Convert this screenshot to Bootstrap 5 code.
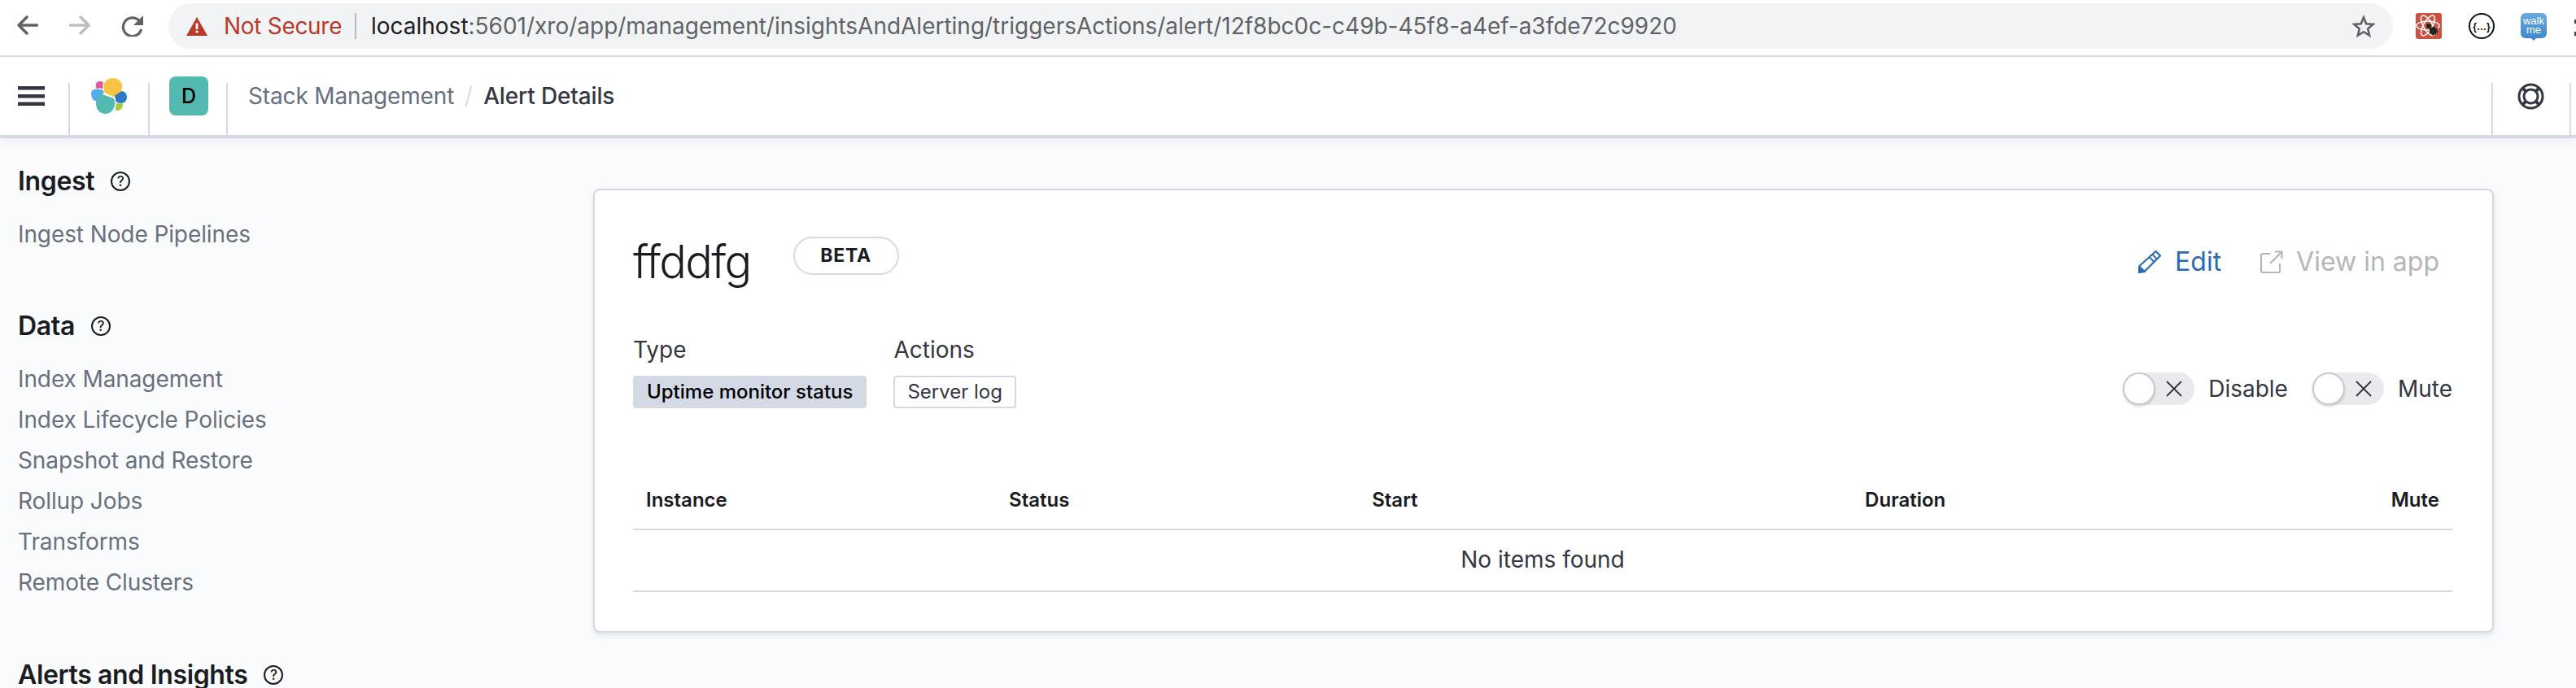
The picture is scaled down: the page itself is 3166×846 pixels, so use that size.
<!doctype html>
<html lang="en">
<head>
<meta charset="utf-8">
<title>Alert Details</title>
<link href="https://cdn.jsdelivr.net/npm/bootstrap@5.3.0/dist/css/bootstrap.min.css" rel="stylesheet">
<style>
html,body{height:846px;overflow:hidden}
body{background:#fafbfd;font-family:Inter,"Liberation Sans",sans-serif;color:#343741;width:3166px}
svg{display:block;flex:none}
.chrome{height:70px;background:#fff;border-bottom:2px solid #dadce0}
.back-ic{margin-left:21px;margin-top:19px}
.fwd-ic{margin-left:38px;margin-top:19px}
.reload-ic{margin-left:38px;margin-top:19px}
.omni{margin-left:30px;width:2736px;height:56px;margin-top:4px;background:#f1f3f4;border-radius:28px}
.warn-ic{margin-left:22px}
.insecure{margin-left:20px;font-size:28px;color:#b93a2b;letter-spacing:-.3px;width:146px;white-space:nowrap}
.omni-sep{margin-left:15px;width:2px;height:32px;background:#b6b8bb}
.url{margin-left:18px;font-size:28px;color:#5f6368;white-space:nowrap;letter-spacing:-.01px;width:1700px}
.url b{font-weight:400;color:#1c1d1f}
.star-ic{margin-left:auto;margin-right:22px}
.ext-ic{margin-top:16px}
.ext1{margin-left:28px}
.ext2{margin-left:33px}
.ext3{margin-left:32px}
.ext-cut{margin-left:34px;margin-top:24px;width:2px;height:20px;border-top:5px solid #444;border-bottom:5px solid #444}
.kbn{height:100px;background:#fff;border-bottom:4px solid #d3dae6;box-shadow:0 4px 8px rgba(152,162,179,.15);padding-right:6px}
.kbn-cell{height:96px}
.vdiv{width:2px;height:64px;background:#d3dae6;align-self:flex-end;flex:none}
.burger{margin:36px 29px 0 22px}
.logo{margin:26px 26px 0 26px}
.avatar{margin:24px 22px 0 24px;width:48px;height:48px;background:#54b9b0;border-radius:8px;font-size:25px;line-height:48px;color:#000;text-align:center;font-weight:500}
.crumbs{margin-left:25px;height:96px;font-size:28px;white-space:nowrap;letter-spacing:-.15px}
.crumbs .c1{color:#69707d}
.crumbs .c2{color:#343741;font-weight:500}
.crumb-sl{width:2px;height:26px;background:#d3dae6;transform:rotate(15deg);margin:0 17px}
.buoy{margin:32px 31px 0 30px}
.sidebar{width:729px;flex:none;padding:33px 0 0 22px}
.side-h{font-size:32px;line-height:40px;font-weight:600;color:#1a1c21;margin:0;height:40px;letter-spacing:-.35px}
.qmark{width:24px;height:24px;border:2px solid #1a1c21;border-radius:50%;font-size:17px;line-height:20px;font-weight:500;text-align:center;color:#1a1c21;margin-left:20px}
.side-list{margin:20px 0 0;padding:0;list-style:none}
.side-list li{font-size:28px;line-height:50px;height:50px;color:#69707d;letter-spacing:-.1px}
.sec-gap{margin-top:68px}
.sec-gap2{margin-top:69px}
.panel{width:2336px;height:546px;margin-top:62px;background:#fff;border:2px solid #d3dae6;border-radius:8px;box-shadow:0 3px 6px rgba(152,162,179,.25);padding:0 49px 0 47px}
.title-row{height:166px;padding-top:54px}
.al-title{font-size:56px;line-height:68px;font-weight:300;color:#1a1c21;margin:0;letter-spacing:-.03em}
.beta{margin:3px 0 0 52px;width:130px;height:47px;border:2px solid #d3dae6;border-radius:24px;font-size:23px;line-height:43px;font-weight:700;text-align:center;letter-spacing:.8px;color:#1a1c21}
.act{font-size:32px;line-height:40px;margin-top:14px;white-space:nowrap}
.act-edit{color:#2a6bb3}
.ext-link{margin-left:48px}
.act-view{color:#b5b6ba;margin-right:16px}
.meta-lab{font-size:28px;line-height:36px;color:#343741}
.tag-wrap{margin-top:14px}
.tag-fill{background:#d3dae6;color:#000;font-size:24px;font-weight:500;height:40px;line-height:40px;padding:0 17px;border-radius:4px;white-space:nowrap}
.tag-line{background:#fff;border:2px solid #d3dae6;color:#343741;font-size:24px;height:40px;line-height:36px;padding:0 15px;border-radius:4px;white-space:nowrap}
.meta-col2{margin-left:33px}
.meta-row{height:160px;padding-top:12px}
.tog{width:88px;height:40px;background:#e9eaee;border-radius:20px}
.knob{width:40px;height:40px;background:#fff;border:2px solid #c9cbcd;border-radius:50%;box-shadow:0 2px 3px rgba(0,0,0,.15);flex:none}
.tog svg{margin-left:12px}
.tog-lab{font-size:28px;margin-left:17px;line-height:40px}
.gap-tog{margin-left:30px}
.meta-right{margin-top:46px;height:40px}
.tbl{table-layout:fixed;width:100%;margin:26px 0 0;--bs-table-bg:transparent}
.tbl th{font-size:24px;font-weight:600;color:#1a1c21;line-height:32px;height:65px;padding:13px 16px 0;vertical-align:top;border-bottom:2px solid #d3dae6}
.tbl td{font-size:28px;height:76px;line-height:34px;padding:0 0 2px;vertical-align:middle;text-align:center;color:#343741;border-bottom:2px solid #d3dae6}
</style>
</head>
<body>
<div class="chrome d-flex align-items-start">
  <svg class="back-ic" width="26" height="24" viewBox="0 0 26 24" fill="none" stroke="#5f6368" stroke-width="3.4" stroke-linecap="round" stroke-linejoin="round"><path d="M24.5 12H2M12 2 2 12l10 10"/></svg>
  <svg class="fwd-ic" width="26" height="24" viewBox="0 0 26 24" fill="none" stroke="#bdbec0" stroke-width="3.4" stroke-linecap="round" stroke-linejoin="round"><path d="M1.5 12H24M14 2l10 10-10 10"/></svg>
  <svg class="reload-ic" width="28" height="26" viewBox="149 19 28 26" fill="none"><path d="M171 25.5A11.3 11.3 0 1 0 173.6 36" stroke="#5f6368" stroke-width="3.2"/><path d="M176 19v12h-12z" fill="#5f6368"/></svg>
  <div class="omni d-flex align-items-center">
    <svg class="warn-ic" width="26" height="23" viewBox="0 0 26 23"><path d="M13 0 26 23H0z" fill="#b93a2b"/><rect x="11.6" y="7.5" width="2.8" height="7.5" fill="#fff"/><rect x="11.6" y="16.6" width="2.8" height="2.8" fill="#fff"/></svg>
    <span class="insecure">Not Secure</span>
    <span class="omni-sep"></span>
    <span class="url"><b>localhost</b>:5601/xro/app/management/insightsAndAlerting/triggersActions/alert/12f8bc0c-c49b-45f8-a4ef-a3fde72c9920</span>
    <svg class="star-ic" width="28" height="29" viewBox="0 0 28 29" fill="none" stroke="#5f6368" stroke-width="2.6"><path d="M14 3.5l3.2 7.7 8.3.7-6.3 5.5 1.9 8.1L14 21.2l-7.1 4.3 1.9-8.1-6.3-5.5 8.3-.7z"/></svg>
  </div>
  <svg class="ext-ic ext1" width="32" height="32" viewBox="0 0 32 32"><rect width="32" height="32" rx="3" fill="#cb5240"/><g fill="none" stroke="#fff" stroke-width="1.5"><ellipse cx="15" cy="15.500" rx="14" ry="5.500"/><ellipse cx="15" cy="15.500" rx="14" ry="5.500" transform="rotate(60 15 15.500)"/><ellipse cx="15" cy="15.500" rx="14" ry="5.500" transform="rotate(120 15 15.500)"/></g><circle cx="16" cy="16" r="3" fill="#222"/><path d="M17 19l6-3 1 3 3-1-1 3 2 3-3 0 0 3-2-1-2 3-1-4-3 1z" fill="#222"/></svg>
  <svg class="ext-ic ext2" width="32" height="32" viewBox="0 0 32 32"><circle cx="16" cy="16" r="15" fill="#fff" stroke="#111" stroke-width="2"/><text x="16" y="20.500" text-anchor="middle" font-size="12" font-family="Liberation Sans" font-weight="700" fill="#111">{…}</text></svg>
  <svg class="ext-ic ext3" width="32" height="34" viewBox="0 0 32 34"><defs><linearGradient id="wm" x1="0" y1="0" x2="0" y2="1"><stop offset="0" stop-color="#68aadf"/><stop offset="1" stop-color="#3d86c6"/></linearGradient></defs><path d="M6 0h20a6 6 0 0 1 6 6v19a6 6 0 0 1-6 6h-7l-3 3-3-3H6a6 6 0 0 1-6-6V6a6 6 0 0 1 6-6z" fill="url(#wm)"/><text x="16" y="14" text-anchor="middle" font-size="13" font-family="Liberation Sans" fill="#fff">walk</text><text x="16" y="25" text-anchor="middle" font-size="13" font-family="Liberation Sans" fill="#fff">me</text></svg>
  <span class="ext-cut"></span>
</div>

<header class="kbn d-flex">
  <div class="kbn-cell"><svg class="burger" width="33" height="24" viewBox="0 0 33 24" fill="#343741"><rect width="33" height="4.500"/><rect y="10" width="33" height="4.500"/><rect y="19.500" width="33" height="4.500"/></svg></div>
  <span class="vdiv"></span>
  <div class="kbn-cell"><svg class="logo" width="44" height="44" viewBox="0 0 44 44"><path d="M15.700 9C16 3.500 21 0 26.700 0 33.500 0 38 4.500 38 10c0 3-.6 5-1.300 7L28 23.300 16.500 18c-.6-3-.9-6-.8-9z" fill="#f7c444"/><path d="M5.700 9c0-3 2-5 5-5 2 0 3.500.7 4.300 1.500-.6 2.500-.6 5-.3 7.500L9 12.500 7 13c-1-1-1.300-2.500-1.300-4z" fill="#e0579a"/><path d="M0 19c0-3 2.500-5.500 6-5.500l3-.1 6 1.500.6 3.500-9.500 9.800C2.500 28 0 24 0 19z" fill="#51ace8"/><path d="M29 21.500l8.500-5.500c4 .5 6.500 3.500 6.500 7.500 0 4-3 7.500-7.500 7.500-2 0-4.500-1-6-2z" fill="#2f78c6"/><path d="M6 32c0-5 2-9 4-11.500L15 20.500l12 4c2 2 2.300 4.500 2 8-.5 6.500-5.500 11.500-11.500 11.500C11 44 6 38.500 6 32z" fill="#54b9b0"/><path d="M30.500 31l8.500.6c.3 4.500-2.800 8.400-7.500 8.400l-1.500-.4z" fill="#a3cb3e"/></svg></div>
  <span class="vdiv"></span>
  <div class="kbn-cell"><div class="avatar">D</div></div>
  <span class="vdiv"></span>
  <nav class="crumbs d-flex align-items-center flex-grow-1" aria-label="breadcrumb"><span class="c1">Stack Management</span><span class="crumb-sl"></span><span class="c2">Alert Details</span></nav>
  <span class="vdiv"></span>
  <div class="kbn-cell"><svg class="buoy" width="33" height="33" viewBox="0 0 33 33" fill="none" stroke="#343741" stroke-width="3"><circle cx="16.500" cy="16.500" r="14.500"/><circle cx="16.500" cy="16.500" r="8.500"/><path d="M6.200 6.200l4.300 4.300M26.800 6.200l-4.300 4.300M6.200 26.800l4.300-4.300M26.800 26.800l-4.300-4.300" stroke-width="4"/></svg></div>
  <span class="vdiv"></span>
</header>

<div class="d-flex">
  <aside class="sidebar">
    <div class="d-flex align-items-center"><h2 class="side-h">Ingest</h2><span class="qmark">?</span></div>
    <ul class="side-list"><li>Ingest Node Pipelines</li></ul>
    <div class="d-flex align-items-center sec-gap"><h2 class="side-h">Data</h2><span class="qmark">?</span></div>
    <ul class="side-list">
      <li>Index Management</li><li>Index Lifecycle Policies</li><li>Snapshot and Restore</li><li>Rollup Jobs</li><li>Transforms</li><li>Remote Clusters</li>
    </ul>
    <div class="d-flex align-items-center sec-gap2"><h2 class="side-h">Alerts and Insights</h2><span class="qmark">?</span></div>
  </aside>
  <main class="panel">
    <div class="title-row d-flex align-items-start">
      <h1 class="al-title">ffddfg</h1>
      <span class="beta">BETA</span>
      <div class="act d-flex align-items-center ms-auto">
        <svg class="me-3" width="30" height="30" viewBox="0 0 30 30" fill="none" stroke="#2a6bb3" stroke-width="2.2" stroke-linejoin="round"><path d="M22.500 2 28 7.500 10 25.500 2 28l.5-8z"/><path d="M18.500 6l5.500 5.500M15 9.500l5.500 5.500" stroke-width="1.800"/><path d="M2.500 21l6.500 6L2 28z" fill="#2a6bb3"/></svg>
        <span class="act-edit">Edit</span>
        <svg class="ext-link me-3" width="28" height="28" viewBox="0 0 28 28" fill="none" stroke="#b5b6ba" stroke-width="2.200"><path d="M12 4H3a2 2 0 0 0-2 2v19a2 2 0 0 0 2 2h19a2 2 0 0 0 2-2v-9"/><path d="M12 16 26.500 1.500M18 1.500h8.500V10"/></svg>
        <span class="act-view">View in app</span>
      </div>
    </div>
    <div class="meta-row d-flex align-items-start">
      <div>
        <div class="meta-lab">Type</div>
        <div class="d-flex tag-wrap"><span class="tag-fill">Uptime monitor status</span></div>
      </div>
      <div class="meta-col2">
        <div class="meta-lab">Actions</div>
        <div class="d-flex tag-wrap"><span class="tag-line">Server log</span></div>
      </div>
      <div class="meta-right d-flex ms-auto">
        <div class="tog d-flex align-items-center"><span class="knob"></span><svg width="22" height="22" viewBox="0 0 22 22" stroke="#343741" stroke-width="1.800" fill="none"><path d="M2 2l18 18M20 2 2 20"/></svg></div>
        <span class="tog-lab">Disable</span>
        <div class="tog gap-tog d-flex align-items-center"><span class="knob"></span><svg width="22" height="22" viewBox="0 0 22 22" stroke="#343741" stroke-width="1.800" fill="none"><path d="M2 2l18 18M20 2 2 20"/></svg></div>
        <span class="tog-lab">Mute</span>
      </div>
    </div>
    <table class="table tbl">
      <colgroup><col style="width:19.950%"><col style="width:19.950%"><col style="width:27.100%"><col style="width:26.800%"><col style="width:6.200%"></colgroup>
      <thead><tr><th>Instance</th><th>Status</th><th>Start</th><th>Duration</th><th class="text-end">Mute</th></tr></thead>
      <tbody><tr><td colspan="5">No items found</td></tr></tbody>
    </table>
  </main>
</div>
</body>
</html>
